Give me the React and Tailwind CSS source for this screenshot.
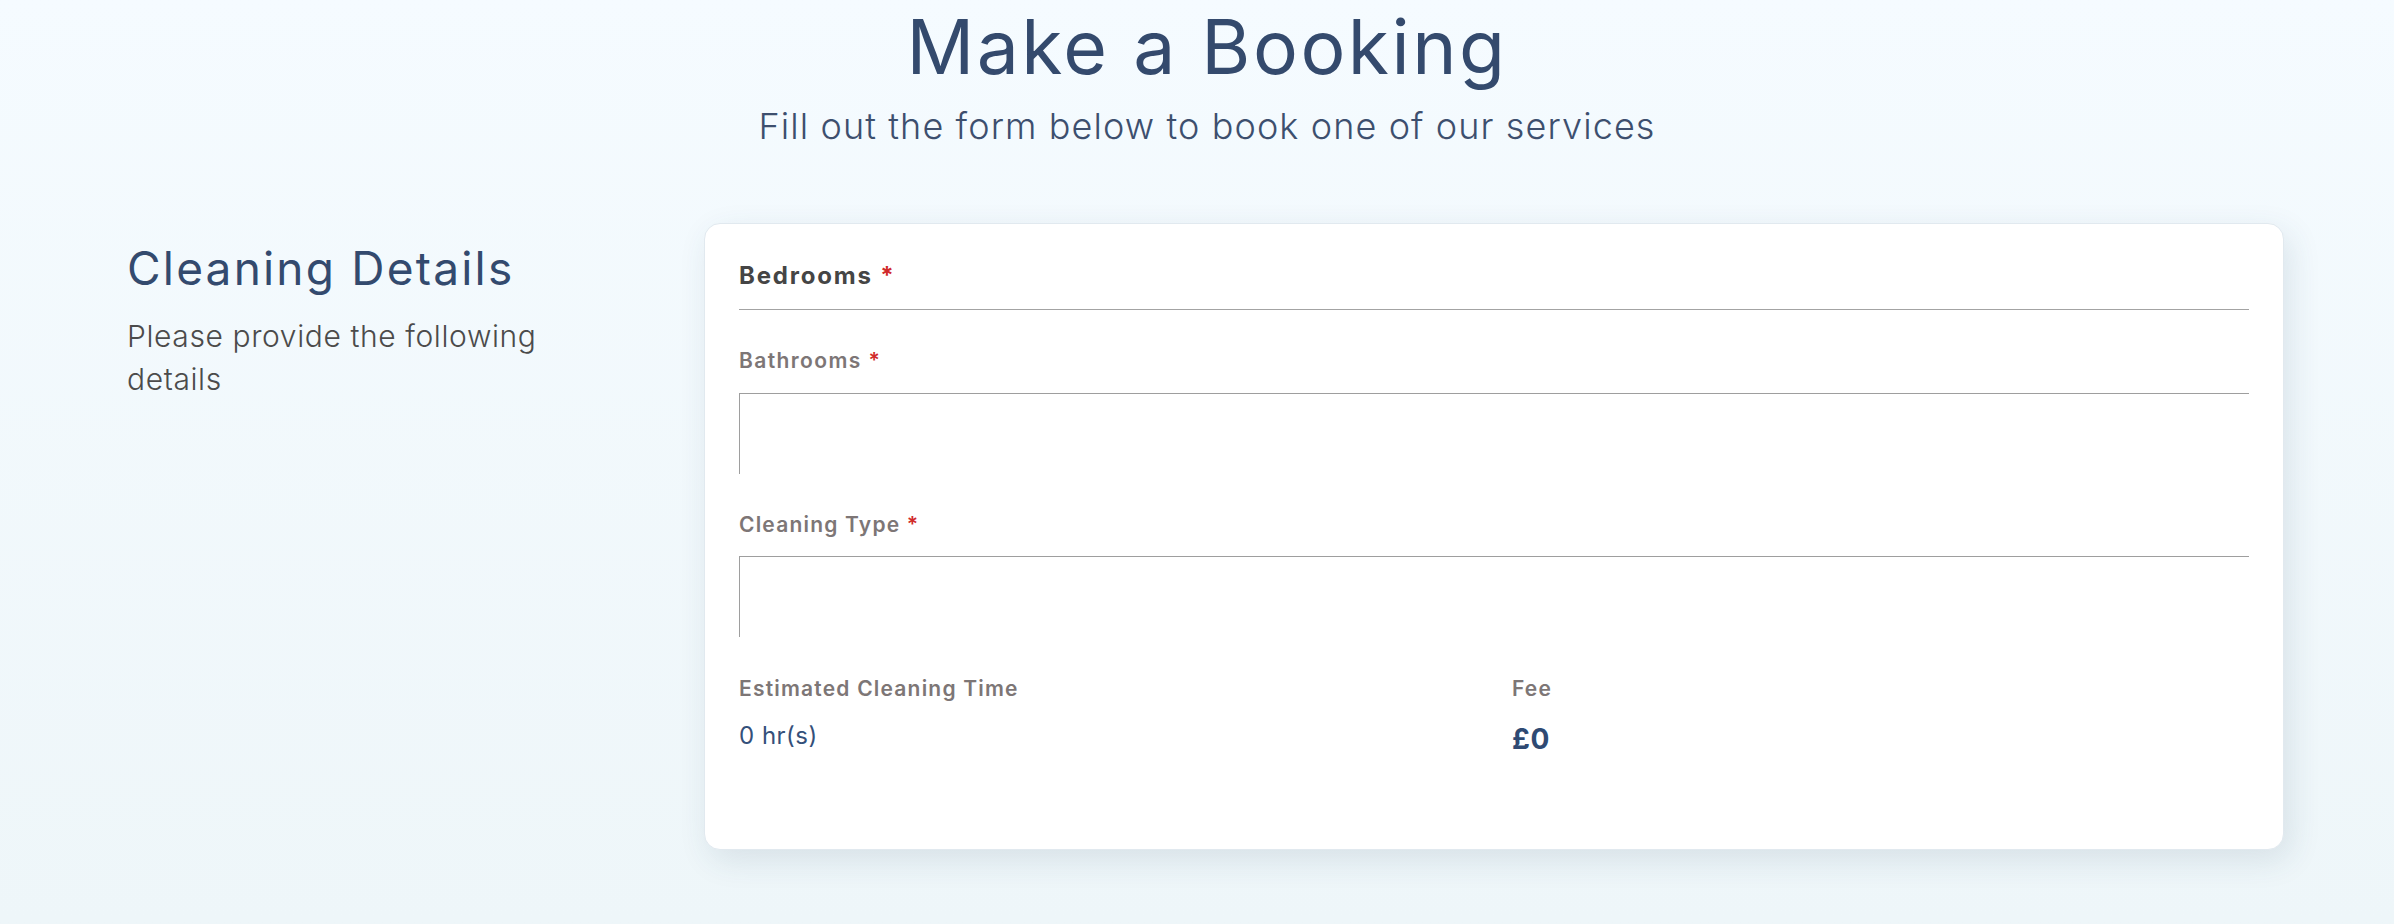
export default function App() {
  const font = "font-['Inter','Noto_Sans',sans-serif]";

  return (
    <div className={`min-h-screen bg-linear-to-b from-[#f5fbff] to-[#eef6f9] ${font}`}>
      {/* Page heading */}
      <header className="text-center pt-[2px] pl-[20px]">
        <h1 className="text-[75px] leading-[1.2] font-normal text-[#344a6d] tracking-[2.5px]">
          Make a Booking
        </h1>
        <p className="mt-[7px] text-[36px] leading-[1.5] font-light text-[#3d4f6e] tracking-[1.1px]">
          Fill out the form below to book one of our services
        </p>
      </header>

      <div className="flex mt-[70px] pl-[127px] pr-[110px] pb-[60px]">
        {/* Section intro */}
        <div className="w-[577px] shrink-0 pt-[18px]">
          <h2 className="text-[46px] leading-[1.2] text-[#334a6e] tracking-[2.2px]">Cleaning Details</h2>
          <p className="mt-[19px] max-w-[450px] text-[30px] leading-[43px] font-light text-[#4b4b4b] tracking-[0.6px]">
            Please provide the following details
          </p>
        </div>

        {/* Form card */}
        <div className="flex-1 bg-white rounded-2xl border border-[#e1e9ef] shadow-[6px_10px_32px_rgba(40,70,100,0.12)] px-[34px] pt-[34px] pb-[89px]">
          <label className="block pb-[15px] border-b border-[#a3a3a3] text-[24px] leading-[1.5] font-bold text-[#454545] tracking-[1.8px]">
            Bedrooms <span className="text-[#d12a2a]">*</span>
          </label>

          <div className="mt-[35px]">
            <label className="block mb-[16px] text-[21px] leading-[1.5] font-semibold text-[#7d7676] tracking-[1.4px]">
              Bathrooms <span className="text-[#d12a2a]">*</span>
            </label>
            <div className="h-[81px] border-t border-l border-[#9e9e9e]" />
          </div>

          <div className="mt-[35px]">
            <label className="block mb-[16px] text-[21px] leading-[1.5] font-semibold text-[#7d7676] tracking-[1.2px]">
              Cleaning Type <span className="text-[#d12a2a]">*</span>
            </label>
            <div className="h-[81px] border-t border-l border-[#9e9e9e]" />
          </div>

          <div className="mt-[36px] grid grid-cols-2 gap-x-[36px]">
            <div>
              <div className="text-[21px] leading-[1.5] font-semibold text-[#7d7676] tracking-[1.2px]">
                Estimated Cleaning Time
              </div>
              <div className="mt-[13px] text-[24px] leading-[1.5] text-[#34507a] tracking-[0.5px]">0 hr(s)</div>
            </div>
            <div>
              <div className="text-[21px] leading-[1.5] font-semibold text-[#7d7676] tracking-[1.2px]">Fee</div>
              <div className="mt-[13px] text-[28px] leading-[1.5] font-bold text-[#2f4a73] tracking-[0.5px]">£0</div>
            </div>
          </div>
        </div>
      </div>
    </div>
  );
}
